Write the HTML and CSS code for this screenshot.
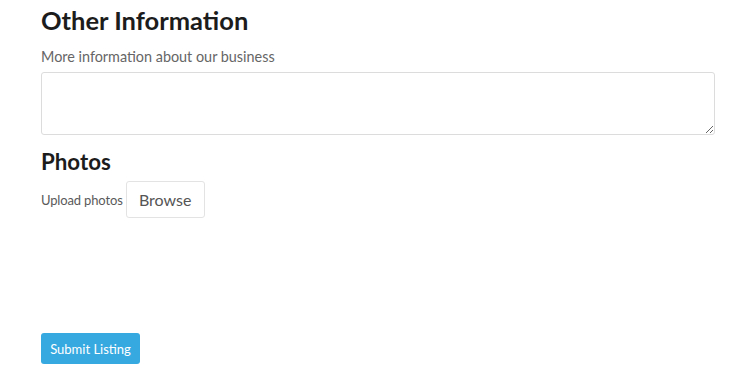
FILE: index.html
```html
<!DOCTYPE html>
<html>
<head>
<meta charset="utf-8">
<link rel="stylesheet" href="styles.css">
</head>
<body>
<div class="page">
  <h2 class="title">Other Information</h2>
  <label class="label">More information about our business</label>
  <textarea class="textarea"></textarea>
  <h3 class="subtitle">Photos</h3>
  <div class="upload-row">
    <span class="upload-label">Upload photos</span>
    <button class="browse">Browse</button>
  </div>
  <div class="spacer"></div>
  <button class="submit">Submit Listing</button>
</div>
</body>
</html>
```
FILE: styles.css
```css
html, body {
  margin: 0;
  padding: 0;
  background: #fff;
}
body {
  font-family: Lato, "Noto Sans", sans-serif;
  color: #222;
}
.page {
  display: flex;
  flex-direction: column;
  align-items: flex-start;
  padding: 4px 35px 0 41px;
}
.title {
  margin: 0;
  font-size: 25.5px;
  font-weight: 700;
  line-height: 32px;
  color: #1c1c1c;
}
.label {
  font-size: 14.4px;
  color: #666;
  line-height: 18px;
  margin-top: 12px;
}
.textarea {
  box-sizing: border-box;
  margin-top: 6px;
  width: 674px;
  height: 63px;
  border: 1px solid #dcdcdc;
  border-radius: 3px;
  resize: vertical;
  font-family: inherit;
}
.subtitle {
  margin: 13px 0 0;
  font-size: 22.3px;
  font-weight: 700;
  line-height: 28px;
  color: #1c1c1c;
}
.upload-row {
  display: flex;
  align-items: center;
  margin-top: 5px;
  gap: 3px;
}
.upload-label {
  font-size: 13px;
  letter-spacing: -0.15px;
  color: #5a5a5a;
  line-height: 18px;
}
.browse {
  box-sizing: border-box;
  width: 79px;
  height: 37px;
  background: #fff;
  border: 1px solid #e3e3e3;
  border-radius: 3px;
  font-family: inherit;
  font-size: 16px;
  color: #555;
  padding: 0;
}
.spacer {
  height: 115px;
}
.submit {
  box-sizing: border-box;
  width: 99px;
  height: 31px;
  background: #36a9e1;
  border: none;
  border-radius: 3px;
  color: #fff;
  font-family: inherit;
  font-size: 13px;
  padding: 0;
}
```
